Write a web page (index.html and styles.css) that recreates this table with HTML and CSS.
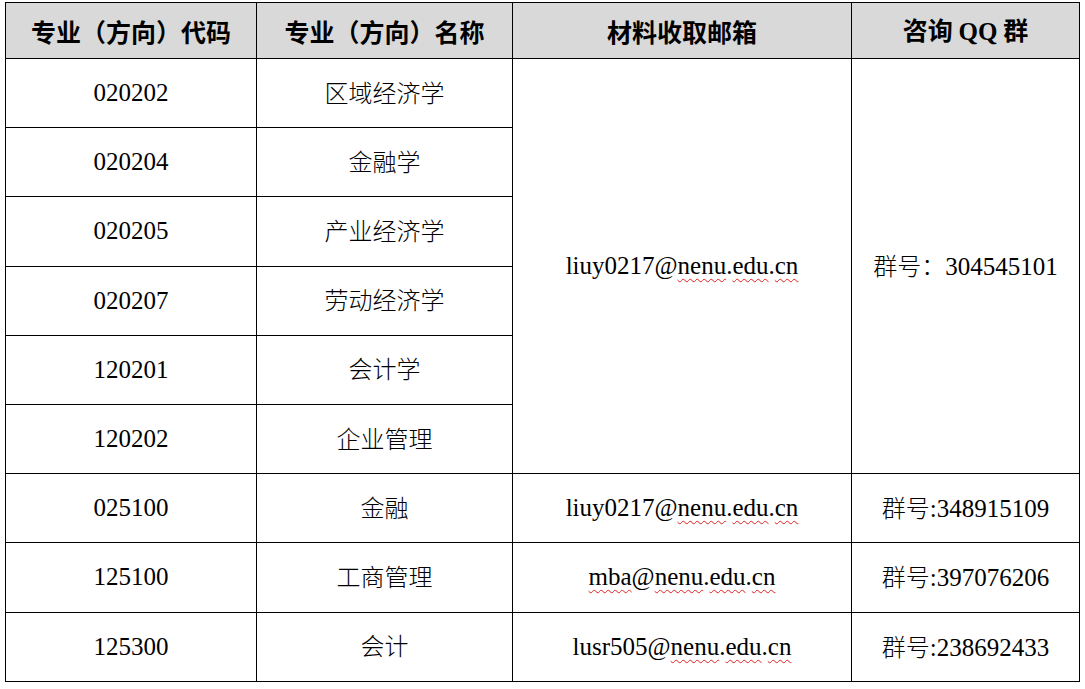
FILE: index.html
```html
<!DOCTYPE html>
<html lang="zh-CN">
<head>
<meta charset="utf-8">
<title>专业咨询</title>
<link rel="stylesheet" href="styles.css">
</head>
<body>
<table class="grid">
  <colgroup>
    <col class="c1"><col class="c2"><col class="c3"><col class="c4">
  </colgroup>
  <thead>
    <tr class="head">
      <th>专业（方向）代码</th>
      <th>专业（方向）名称</th>
      <th>材料收取邮箱</th>
      <th>咨询 <span class="lat">QQ</span> 群</th>
    </tr>
  </thead>
  <tbody>
    <tr>
      <td>020202</td><td class="zh">区域经济学</td>
      <td rowspan="6">liuy0217@<span class="sp">nenu</span>.<span class="sp">edu</span>.<span class="sp">cn</span></td>
      <td rowspan="6"><span class="zh">群号：</span>304545101</td>
    </tr>
    <tr><td>020204</td><td class="zh">金融学</td></tr>
    <tr><td>020205</td><td class="zh">产业经济学</td></tr>
    <tr><td>020207</td><td class="zh">劳动经济学</td></tr>
    <tr><td>120201</td><td class="zh">会计学</td></tr>
    <tr><td>120202</td><td class="zh">企业管理</td></tr>
    <tr>
      <td>025100</td><td class="zh">金融</td>
      <td>liuy0217@<span class="sp">nenu</span>.<span class="sp">edu</span>.<span class="sp">cn</span></td>
      <td><span class="zh">群号</span>:348915109</td>
    </tr>
    <tr>
      <td>125100</td><td class="zh">工商管理</td>
      <td><span class="sp">mba</span>@<span class="sp">nenu</span>.<span class="sp">edu</span>.<span class="sp">cn</span></td>
      <td><span class="zh">群号</span>:397076206</td>
    </tr>
    <tr>
      <td>125300</td><td class="zh">会计</td>
      <td>lusr505@<span class="sp">nenu</span>.<span class="sp">edu</span>.<span class="sp">cn</span></td>
      <td><span class="zh">群号</span>:238692433</td>
    </tr>
  </tbody>
</table>
</body>
</html>
```

FILE: styles.css
```css
html, body {
  margin: 0;
  padding: 0;
  background: #ffffff;
}

body {
  padding: 2px 0 0 5px;
  font-family: "Liberation Serif", "Times New Roman", serif;
  color: #000000;
}

.grid {
  border-collapse: collapse;
  table-layout: fixed;
  width: 1074px;
}

.c1 { width: 251px; }
.c2 { width: 256px; }
.c3 { width: 339px; }
.c4 { width: 228px; }

.grid th,
.grid td {
  border: 1px solid #000000;
  padding: 0;
  text-align: center;
  vertical-align: middle;
  font-family: "Liberation Serif", "Times New Roman", serif;
  font-size: 25px;
  line-height: 28px;
}

.grid .head th {
  height: 55px;
  background: #d9d9d9;
  font-family: "Noto Sans CJK SC", sans-serif;
  font-weight: 700;
  font-size: 25px;
}

.grid .head .lat {
  font-family: "Liberation Serif", serif;
  font-weight: 700;
}

.grid tbody tr {
  height: 69.2px;
}

.grid .zh {
  font-family: "Noto Sans CJK SC", sans-serif;
  font-weight: 300;
  font-size: 24px;
}

.grid td.zh {
  padding-bottom: 3px;
}

.sp {
  text-decoration: underline wavy #e02020;
  text-decoration-thickness: 1px;
  text-underline-offset: 4px;
}
```
